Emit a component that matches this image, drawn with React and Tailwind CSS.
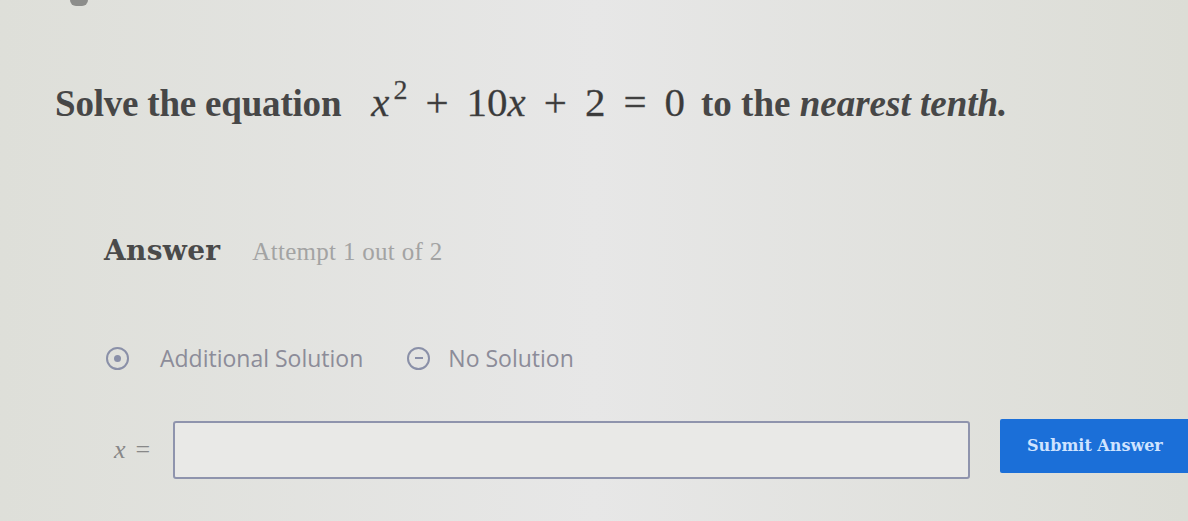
import React from "react";

export default function App() {
  const serif = { fontFamily: '"Liberation Serif", "DejaVu Serif", serif' };
  return (
    <div className="w-[1188px] h-[521px] overflow-hidden bg-gradient-to-r from-[#dedfd9] via-[#e7e7e7] to-[#dcddd6] text-[#3c3c3c] relative" style={serif}>
      <div className="absolute left-[70px] top-0 w-[18px] h-[6px] rounded-b-full bg-[#555]/60"></div>
      <div className="pt-[78px] pl-[55px]">
        <div className="flex items-baseline text-[37px] leading-[48px] text-[#474747] whitespace-nowrap">
          <span className="font-bold tracking-[-0.2px]">Solve the equation</span>
          <span className="ml-[30px] text-[#3a3a3a] text-[41px] [-webkit-text-stroke:0.3px_#555]">
            <i>x</i><span className="text-[28px] relative -top-[17px] ml-[4px]">2</span>
            <span className="mx-[18px]">+</span>10<i>x</i>
            <span className="mx-[18px]">+</span>2
            <span className="mx-[18px]">=</span>0
          </span>
          <span className="ml-[16px] font-bold">to the <i>nearest tenth.</i></span>
        </div>
      </div>

      <div className="mt-[99px] pl-[104px] flex items-baseline gap-[32px]">
        <span className="text-[28px] font-bold text-[#4a4a4a] tracking-[0.3px]" style={{ fontFamily: '"DejaVu Serif", serif' }}>Answer</span>
        <span className="text-[25px] text-[#a3a3a3] tracking-[0.3px]">Attempt 1 out of 2</span>
      </div>

      <div className="mt-[69px] pl-[106px] flex items-center text-[23px] text-[#8c8c99]" style={{ fontFamily: '"Open Sans", "Noto Sans", sans-serif' }}>
        <span className="w-[23px] h-[23px] rounded-full border-[2.5px] border-[#8a90a8] flex items-center justify-center">
          <span className="w-[7px] h-[7px] rounded-full bg-[#8a90a8]"></span>
        </span>
        <span className="ml-[31px]">Additional Solution</span>
        <span className="ml-[44px] w-[23px] h-[23px] rounded-full border-[2.5px] border-[#8a90a8] flex items-center justify-center">
          <span className="w-[8px] h-[2px] bg-[#8a90a8]"></span>
        </span>
        <span className="ml-[18px]">No Solution</span>
      </div>

      <div className="mt-[45px] pl-[114px] flex items-center">
        <span className="shrink-0 text-[26px] text-[#888] w-[59px]"><i>x</i><span className="ml-[10px]">=</span></span>
        <div className="shrink-0 w-[797px] h-[58px] border-2 border-[#8f94ad] rounded-[3px] bg-[#e9e9e7]"></div>
        <button className="shrink-0 ml-[30px] -mt-[8px] w-[200px] h-[54px] bg-[#1b6fd8] rounded-[2px] text-[#cfe3ff] font-bold text-left pl-[27px]" style={{ fontFamily: '"DejaVu Serif", serif', fontSize: "16px" }}>
          Submit Answer
        </button>
      </div>
    </div>
  );
}
